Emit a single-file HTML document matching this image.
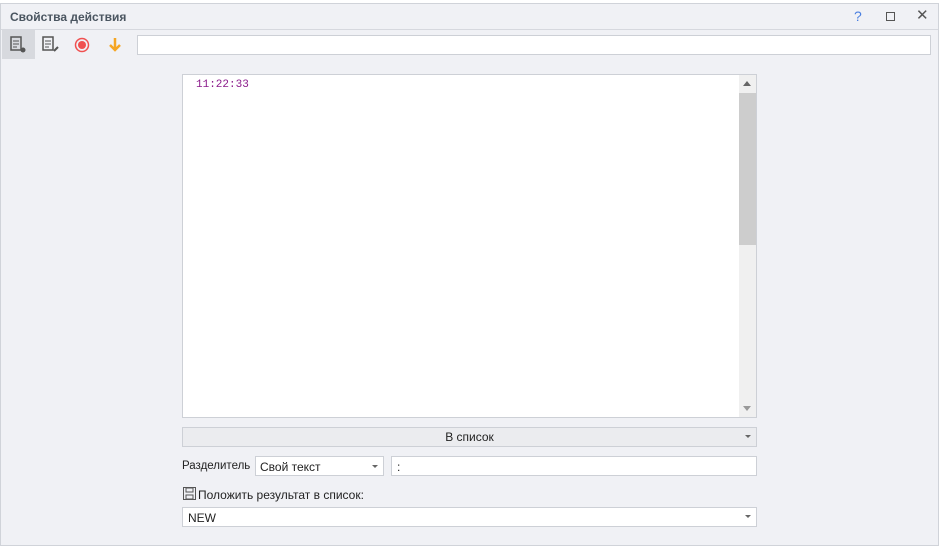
<!DOCTYPE html>
<html><head><meta charset="utf-8"><style>
*{box-sizing:border-box;margin:0;padding:0}
body{width:940px;height:549px;background:#fff;font-family:"Liberation Sans",sans-serif;font-size:12px;color:#222;position:relative;overflow:hidden}
.win{position:absolute;left:0;top:3px;width:939px;height:543px;background:#f0f1f5;border:1px solid #d0d3d9}
.abs{position:absolute}
.box{position:absolute;background:#fff;border:1px solid #cdd0d6}
</style></head><body>
<div class="win">
<div class="abs" style="left:9px;top:6px;font-weight:bold;color:#4a5560;font-size:12px">Свойства действия</div>
<div class="abs" style="left:0;top:25px;width:937px;height:1px;background:#d6d8de"></div>
<div class="abs" style="left:853px;top:4px;color:#4a7fe0;font-size:14px">?</div>
<div class="abs" style="left:885px;top:8px;width:9px;height:9px;border:1.5px solid #555"></div>
<div class="abs" style="left:915px;top:2px;color:#555;font-size:15px">✕</div>
<div class="abs" style="left:1px;top:26px;width:33px;height:29px;background:#d7d9de"></div>
<svg class="abs" style="left:9px;top:32px" width="20" height="18"><rect x="1" y="1" width="10" height="13" fill="none" stroke="#555" stroke-width="1.5"/><path d="M3 5h6M3 8h6M3 11h4" stroke="#555"/><circle cx="13" cy="14" r="2.5" fill="#555"/></svg>
<svg class="abs" style="left:41px;top:32px" width="20" height="18"><rect x="1" y="1" width="10" height="13" fill="none" stroke="#555" stroke-width="1.5"/><path d="M3 5h6M3 8h6M3 11h4" stroke="#555"/><path d="M12 15l4-4" stroke="#555" stroke-width="2"/></svg>
<svg class="abs" style="left:73px;top:33px" width="16" height="16"><circle cx="8" cy="8" r="6.5" fill="none" stroke="#f05050" stroke-width="1.5"/><circle cx="8" cy="8" r="4" fill="#f05050"/></svg>
<svg class="abs" style="left:106px;top:33px" width="16" height="16"><path d="M8 1v12M3 8l5 5 5-5" fill="none" stroke="#f5a623" stroke-width="2.5"/></svg>
<div class="box" style="left:136px;top:31px;width:794px;height:20px"></div>
<div class="box" style="left:181px;top:70px;width:575px;height:344px">
<div class="abs" style="left:13px;top:4px;font-family:'Liberation Mono',monospace;font-size:11px;color:#8a1a8a">11:22:33</div>
<div class="abs" style="right:0;top:0;width:17px;height:342px;background:#f0f0f0"></div>
<div class="abs" style="right:0;top:18px;width:17px;height:152px;background:#cdcdcd"></div>
<div class="abs" style="right:5px;top:6px;border:4px solid transparent;border-bottom:5px solid #666;border-top:0"></div>
<div class="abs" style="right:5px;bottom:6px;border:4px solid transparent;border-top:5px solid #999;border-bottom:0"></div>
</div>
<div class="abs" style="left:181px;top:423px;width:575px;height:20px;background:#ebecef;border:1px solid #cdd0d6;text-align:center;line-height:18px">В список</div>
<div class="abs" style="left:744px;top:431px;border:3px solid transparent;border-top:3px solid #666"></div>
<div class="abs" style="left:181px;top:456px;font-size:11.5px">Разделитель</div>
<div class="box" style="left:254px;top:452px;width:129px;height:20px;padding:3px 4px">Свой текст</div>
<div class="abs" style="left:371px;top:461px;border:3px solid transparent;border-top:3px solid #666"></div>
<div class="box" style="left:390px;top:452px;width:366px;height:20px;padding:3px 5px">:</div>
<svg class="abs" style="left:182px;top:483px" width="13" height="13"><rect x="0.5" y="0.5" width="12" height="12" fill="none" stroke="#555"/><rect x="3" y="1" width="7" height="4" fill="none" stroke="#555"/><rect x="3" y="8" width="7" height="4" fill="none" stroke="#555"/></svg>
<div class="abs" style="left:197px;top:484px">Положить результат в список:</div>
<div class="box" style="left:181px;top:503px;width:575px;height:20px;padding:3px 5px">NEW</div>
<div class="abs" style="left:744px;top:511px;border:3px solid transparent;border-top:3px solid #666"></div>
</div>
</body></html>
